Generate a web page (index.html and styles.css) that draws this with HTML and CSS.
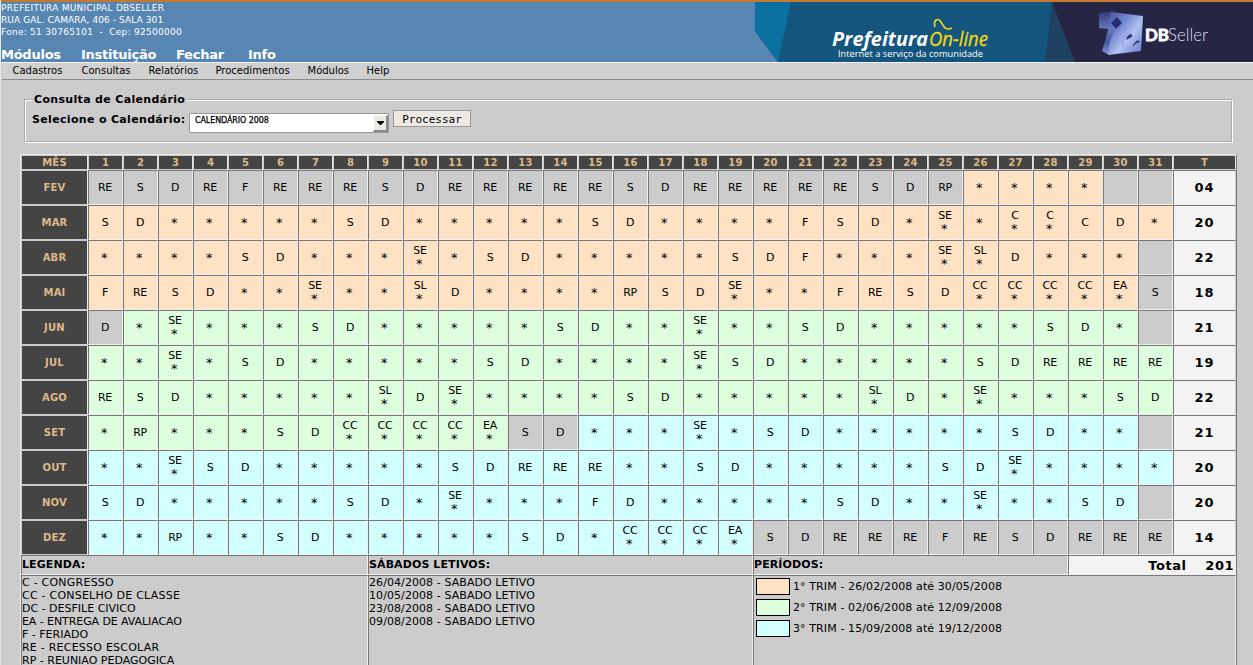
FILE: index.html
```html
<!DOCTYPE html>
<html lang="pt-BR">
<head>
<meta charset="utf-8">
<title>Consulta de Calendário</title>
<link rel="stylesheet" href="styles.css">
</head>
<body>
<header class="top">
  <div class="org">
    <div class="address">
      <div class="a1">PREFEITURA MUNICIPAL DBSELLER</div>
      <div class="a2">RUA GAL. CAMARA, 406 - SALA 301</div>
      <div class="a3">Fone: 51 30765101 &nbsp;- &nbsp;Cep: 92500000</div>
    </div>
    <nav class="main-nav"><span>Módulos</span><span>Instituição</span><span>Fechar</span><span>Info</span></nav>
  </div>
  <svg class="banner" width="498" height="60" viewBox="755 2 498 60">
    <defs>
      <linearGradient id="cube" x1="0" y1="0" x2="1" y2="1"><stop offset="0" stop-color="#4353a0"/><stop offset=".35" stop-color="#7788d2"/><stop offset=".6" stop-color="#b2c2f2"/><stop offset="1" stop-color="#5f74c4"/></linearGradient>
      <linearGradient id="side" x1="0" y1="0" x2="0" y2="1"><stop offset="0" stop-color="#2c3878"/><stop offset=".4" stop-color="#6878bc"/><stop offset=".7" stop-color="#46569c"/><stop offset="1" stop-color="#8698dc"/></linearGradient>
      <filter id="soft" x="-10%" y="-10%" width="120%" height="120%"><feGaussianBlur stdDeviation=".5"/></filter>
    </defs>
    <path d="M755 2H1253V62H778L755 31Z" fill="#13557d"/>
    <path d="M755 2H791L778 62L755 31Z" fill="#0a70a0"/>
    <path d="M1052 2L1045 62H1076Z" fill="#1f4263"/>
    <path d="M1052 2H1253V62H1075Z" fill="#262644"/>
    <text class="pref" x="832" y="45.5" textLength="96" lengthAdjust="spacingAndGlyphs">Prefeitura</text>
    <text class="online" x="929" y="45.5" textLength="59" lengthAdjust="spacingAndGlyphs">On-line</text>
    <path d="M935 27C933 20 938 17 941 22C944 27 946 31 952 28" fill="none" stroke="#efd716" stroke-width="1.7"/>
    <text class="serv" x="838" y="56.5" textLength="145" lengthAdjust="spacingAndGlyphs">Internet a serviço da comunidade</text>
    <g filter="url(#soft)">
      <path d="M1099 13L1114 11L1120 20L1112 38L1109 55L1102 51L1106 38L1108 29L1099 28Z" fill="url(#side)"/>
      <path d="M1111 12L1143 16L1141 51L1108 55L1110 41L1115 29L1108 26Z" fill="url(#cube)"/>
      <path d="M1117 17L1122 23L1116 29L1111 23Z" fill="#282f74"/>
      <path d="M1126 40Q1127 35 1131 34Q1134 36 1130 38ZM1133 47Q1133 42 1138 40L1140 42Q1135 43 1133 47Z" fill="#26336f"/>
      <path d="M1123 47Q1122 37 1130 33M1131 50Q1132 42 1139 39" fill="none" stroke="#8fa2e2" stroke-width="1.2"/>
    </g>
    <text class="db" x="1145" y="41" textLength="24" lengthAdjust="spacingAndGlyphs">DB</text>
    <text class="seller" x="1168" y="41" textLength="40" lengthAdjust="spacingAndGlyphs">Seller</text>
  </svg>
</header>
<nav class="menu"><span>Cadastros</span><span>Consultas</span><span>Relatórios</span><span>Procedimentos</span><span>Módulos</span><span>Help</span></nav>
<main>
  <fieldset class="query">
    <legend>Consulta de Calendário</legend>
    <div class="form">
      <span class="label">Selecione o Calendário:</span>
      <div class="select"><span>CALENDÁRIO 2008</span><i><svg width="7" height="4"><path d="M0 0H7V1L4 4H3L0 1Z" fill="#000"/></svg></i></div>
      <div class="button">Processar</div>
    </div>
  </fieldset>
  <section class="calendar">
    <div class="grid" id="grid"></div>
    <div class="summary">
      <div class="title">LEGENDA:</div><div class="title">SÁBADOS LETIVOS:</div><div class="title">PERÍODOS:</div>
      <div class="sum"><span>Total</span><span>201</span></div>
      <div class="list"><div class="wide">C - CONGRESSO</div><div class="wide">CC - CONSELHO DE CLASSE</div><div>DC - DESFILE CIVICO</div><div class="tight">EA - ENTREGA DE AVALIACAO</div><div>F - FERIADO</div><div class="wide">RE - RECESSO ESCOLAR</div><div>RP - REUNIAO PEDAGOGICA</div></div>
      <div class="list dates"><div>26/04/2008 - SABADO LETIVO</div><div>10/05/2008 - SABADO LETIVO</div><div>23/08/2008 - SABADO LETIVO</div><div>09/08/2008 - SABADO LETIVO</div></div>
      <div class="periods">
        <div><b class="p1"></b>1° TRIM - 26/02/2008 até 30/05/2008</div>
        <div><b class="p2"></b>2° TRIM - 02/06/2008 até 12/09/2008</div>
        <div><b class="p3"></b>3° TRIM - 15/09/2008 até 19/12/2008</div>
      </div>
    </div>
  </section>
</main>
<script src="calendar.js"></script>
</body>
</html>
```
FILE: styles.css
```css
* { box-sizing: border-box; }
body { margin: 0; width: 1253px; height: 665px; overflow: hidden; background: #ccc; border-left: 1px solid #e9e6e1; font-family: "DejaVu Sans", sans-serif; font-size: 10px; color: #000; }
.top { height: 62px; border-top: 2px solid #c47a2f; background: #5786b3; display: flex; justify-content: space-between; }
.org { color: #fff; white-space: nowrap; }
.address { font-size: 9px; line-height: 12px; height: 45px; }
.a1 { letter-spacing: .26px; }
.a2 { letter-spacing: .09px; }
.a3 { letter-spacing: .27px; }
.main-nav { display: flex; font-size: 13px; font-weight: bold; line-height: 15px; letter-spacing: -.25px; }
.main-nav span:nth-child(1) { width: 80px; }
.main-nav span:nth-child(2) { width: 95px; }
.main-nav span:nth-child(3) { width: 72px; }
.banner { display: block; flex: none; }
.pref { font: italic bold 20px "Open Sans", sans-serif; fill: #fff; }
.online { font: italic 20px "Open Sans", sans-serif; fill: #efd716; stroke: #efd716; stroke-width: .3px; }
.serv { font: 9.5px "Open Sans", sans-serif; fill: #fff; }
.db { font: bold 17px Lato, sans-serif; fill: #fff; stroke: #fff; stroke-width: .8px; }
.seller { font: 300 18px Lato, sans-serif; fill: #dcdce6; }
.menu { height: 18px; margin-left: 1px; padding-left: 10.5px; border-top: 1px solid #f3f3f3; border-bottom: 1px solid #8b8b8b; background: #d0d0d0; display: flex; line-height: 16px; }
.menu span:nth-child(1) { width: 69px; }
.menu span:nth-child(2) { width: 67px; }
.menu span:nth-child(3) { width: 67px; }
.menu span:nth-child(4) { width: 92px; }
.menu span:nth-child(5) { width: 59px; }
main { padding: 13px 19px 0 19px; }
.query { margin: 0 0 0 4px; width: 1209px; height: 50px; border: 2px groove #fff; padding: 0 0 0 6px; }
.query legend { font-size: 11px; font-weight: bold; line-height: 13px; padding: 0 2px; letter-spacing: .33px; }
.form { display: flex; font-size: 11px; }
.label { font-weight: bold; width: 157px; line-height: 27px; letter-spacing: .33px; }
.select { width: 200px; height: 20px; margin-top: 7px; border: 1px solid #999; background: #fff; display: flex; justify-content: space-between; padding-left: 5px; font-size: 8px; line-height: 13px; letter-spacing: -.1px; -webkit-text-stroke: .25px #000; }
.select i { width: 15px; margin-top: 1px; background: #edeae5; border: 1px solid #fff; border-right: 2px solid #888; border-bottom: 2px solid #888; display: flex; align-items: center; justify-content: center; }
.button { width: 78px; height: 17px; margin: 4px 0 0 4px; border: 1px solid #999; background: #edeae5; font: 11px/17px "DejaVu Sans Mono", monospace; text-align: center; }
.calendar { margin-top: 11px; width: 1217px; border: 1px solid #e9e9e9; border-right-color: #777; border-bottom: 0; }
.grid { display: grid; grid-template-columns: 67px repeat(31, 35px) 63px; grid-template-rows: 15px; grid-auto-rows: 35px; }
.head, .month { background: #444; color: #deb887; font-weight: bold; display: flex; align-items: center; justify-content: center; border: 1px solid #ccc; letter-spacing: .2px; }
.head { border-right-color: #e4e4e4; }
.month { border-right-color: #eee; }
.day, .total { border: 1px solid #efefef; border-left-color: #777; border-top-color: #777; display: flex; align-items: center; justify-content: center; text-align: center; line-height: 12px; padding-right: 1px; font-size: 11px; letter-spacing: -.3px; }
.star { font-size: 13px; line-height: 12px; padding: 1px 2px 0 0; }
.code { padding-bottom: 1px; }
.code .star { padding: 1px 2px 0 0; height: 12px; }
.off { background: #ccc; }
.p1 { background: #ffe1c4; }
.p2 { background: #deffde; }
.p3 { background: #d2ffff; }
.total { background: #f3f3f3; font-size: 13px; font-weight: bold; letter-spacing: 1px; padding: 0; border-right-color: #ccc; }
.summary { display: grid; grid-template-columns: 347px 385px 315px 168px; grid-template-rows: 20px 110px; font-size: 11px; }
.summary > div { border: 1px solid #efefef; border-left-color: #777; border-top-color: #777; }
.title { font-weight: bold; line-height: 17px; letter-spacing: .1px; }
.sum { background: #f3f3f3; font-weight: bold; font-size: 13px; line-height: 19px; display: flex; justify-content: flex-end; gap: 19px; letter-spacing: .5px; padding-right: 1px; }
.list { line-height: 13px; }
.wide { letter-spacing: .23px; }
.tight { letter-spacing: -.08px; }
.dates { letter-spacing: .08px; }
.periods { grid-column: span 2; padding: 2px; }
.periods div { display: flex; height: 21px; line-height: 17px; letter-spacing: .1px; }
.periods b { width: 34px; height: 17px; border: 1px solid #000; margin-right: 3px; }
```
FILE: calendar.js
```js
// Each month: name, day codes, colour ranges [last day, class], school-day total.
// A trailing "*" on a code marks an event held on a school day.
const months = [
  ['FEV', 'RE S D RE F RE RE RE S D RE RE RE RE RE S D RE RE RE RE RE S D RP * * * *', [[25, 'off'], [29, 'p1'], [31, 'off']], '04'],
  ['MAR', 'S D * * * * * S D * * * * * S D * * * * F S D * SE* * C* C* C D *', [[31, 'p1']], '20'],
  ['ABR', '* * * * S D * * * SE* * S D * * * * * S D F * * * SE* SL* D * * *', [[30, 'p1'], [31, 'off']], '22'],
  ['MAI', 'F RE S D * * SE* * * SL* D * * * * RP S D SE* * * F RE S D CC* CC* CC* CC* EA* S', [[30, 'p1'], [31, 'off']], '18'],
  ['JUN', 'D * SE* * * * S D * * * * * S D * * SE* * * S D * * * * * S D *', [[1, 'off'], [30, 'p2'], [31, 'off']], '21'],
  ['JUL', '* * SE* * S D * * * * * S D * * * * SE* S D * * * * * S D RE RE RE RE', [[31, 'p2']], '19'],
  ['AGO', 'RE S D * * * * * SL* D SE* * * * * S D * * * * * SL* D * SE* * * * S D', [[31, 'p2']], '22'],
  ['SET', '* RP * * * S D CC* CC* CC* CC* EA* S D * * * SE* * S D * * * * * S D * *', [[12, 'p2'], [14, 'off'], [30, 'p3'], [31, 'off']], '21'],
  ['OUT', '* * SE* S D * * * * * S D RE RE RE * * S D * * * * * S D SE* * * * *', [[31, 'p3']], '20'],
  ['NOV', 'S D * * * * * S D * SE* * * * F D * * * * * S D * * SE* * * S D', [[30, 'p3'], [31, 'off']], '20'],
  ['DEZ', '* * RP * * S D * * * * * S D * CC* CC* CC* EA* S D RE RE RE F RE S D RE RE RE', [[19, 'p3'], [31, 'off']], '14']
];
const cell = (cls, text) => `<div class="${cls}">${text}</div>`;
const star = cell('star', '*');
let html = cell('head', 'MÊS');
for (let d = 1; d <= 31; d++) html += cell('head', d);
html += cell('head', 'T');
for (const [name, codes, ranges, total] of months) {
  const list = codes.split(' ');
  html += cell('month', name);
  for (let d = 1; d <= 31; d++) {
    const cls = ranges.find(r => d <= r[0])[1];
    const code = list[d - 1] || '';
    let text = code;
    if (code === '*') text = star;
    else if (code.endsWith('*')) text = cell('code', code.slice(0, -1) + star);
    html += cell('day ' + cls, text);
  }
  html += cell('total', total);
}
document.getElementById('grid').innerHTML = html;
```
